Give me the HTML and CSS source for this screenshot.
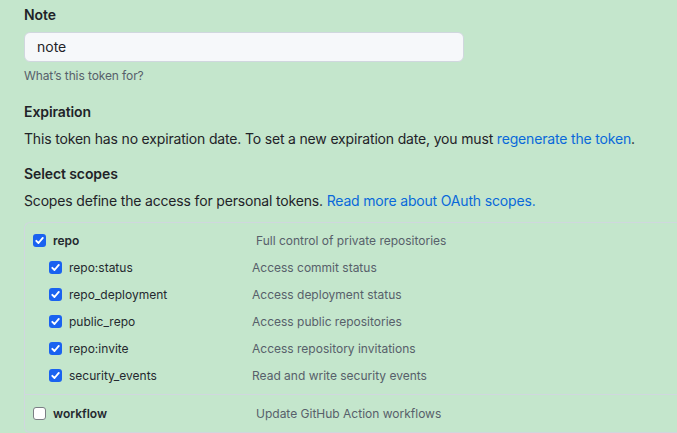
FILE: index.html
```html
<!DOCTYPE html>
<html>
<head>
<meta charset="utf-8">
<link rel="stylesheet" href="styles.css">
</head>
<body>
<div class="page">
  <div class="field">
    <label class="heading">Note</label>
    <div class="input">note</div>
    <p class="hint">What’s this token for?</p>
  </div>
  <div class="section">
    <h3 class="heading">Expiration</h3>
    <p class="text">This token has no expiration date. To set a new expiration date, you must <a class="link">regenerate the token</a>.</p>
  </div>
  <div class="section">
    <h3 class="heading">Select scopes</h3>
    <p class="text">Scopes define the access for personal tokens. <a class="link">Read more about OAuth scopes.</a></p>
  </div>
  <div class="scopes">
    <div class="group">
      <div class="row top">
        <span class="cb on"><svg viewBox="0 0 13 13" width="13" height="13"><path d="M3.3 6.8 L5.5 9 L9.8 3.9" fill="none" stroke="#fff" stroke-width="1.9" stroke-linecap="round" stroke-linejoin="round"/></svg></span>
        <span class="name">repo</span>
        <span class="desc">Full control of private repositories</span>
      </div>
      <div class="row sub">
        <span class="cb on"><svg viewBox="0 0 13 13" width="13" height="13"><path d="M3.3 6.8 L5.5 9 L9.8 3.9" fill="none" stroke="#fff" stroke-width="1.9" stroke-linecap="round" stroke-linejoin="round"/></svg></span>
        <span class="name">repo:status</span>
        <span class="desc">Access commit status</span>
      </div>
      <div class="row sub">
        <span class="cb on"><svg viewBox="0 0 13 13" width="13" height="13"><path d="M3.3 6.8 L5.5 9 L9.8 3.9" fill="none" stroke="#fff" stroke-width="1.9" stroke-linecap="round" stroke-linejoin="round"/></svg></span>
        <span class="name">repo_deployment</span>
        <span class="desc">Access deployment status</span>
      </div>
      <div class="row sub">
        <span class="cb on"><svg viewBox="0 0 13 13" width="13" height="13"><path d="M3.3 6.8 L5.5 9 L9.8 3.9" fill="none" stroke="#fff" stroke-width="1.9" stroke-linecap="round" stroke-linejoin="round"/></svg></span>
        <span class="name">public_repo</span>
        <span class="desc">Access public repositories</span>
      </div>
      <div class="row sub">
        <span class="cb on"><svg viewBox="0 0 13 13" width="13" height="13"><path d="M3.3 6.8 L5.5 9 L9.8 3.9" fill="none" stroke="#fff" stroke-width="1.9" stroke-linecap="round" stroke-linejoin="round"/></svg></span>
        <span class="name">repo:invite</span>
        <span class="desc">Access repository invitations</span>
      </div>
      <div class="row sub">
        <span class="cb on"><svg viewBox="0 0 13 13" width="13" height="13"><path d="M3.3 6.8 L5.5 9 L9.8 3.9" fill="none" stroke="#fff" stroke-width="1.9" stroke-linecap="round" stroke-linejoin="round"/></svg></span>
        <span class="name">security_events</span>
        <span class="desc">Read and write security events</span>
      </div>
    </div>
    <div class="group last">
      <div class="row top">
        <span class="cb off"></span>
        <span class="name">workflow</span>
        <span class="desc">Update GitHub Action workflows</span>
      </div>
    </div>
  </div>
</div>
</body>
</html>
```
FILE: styles.css
```css
html, body {
  margin: 0;
  padding: 0;
  background: #c4e6cc;
}
body {
  font-family: Inter, "Liberation Sans", sans-serif;
  color: #1f2328;
  overflow: hidden;
}
.page {
  padding: 5px 0 0 24px;
}
.heading {
  display: block;
  margin: 0;
  font-size: 14px;
  line-height: 20px;
  font-weight: 600;
  letter-spacing: -0.1px;
}
.input {
  margin-top: 7px;
  box-sizing: border-box;
  width: 440px;
  height: 30px;
  padding: 0 12px;
  line-height: 28px;
  font-size: 14px;
  background: #f6f8fa;
  border: 1px solid #d0d7de;
  border-radius: 6px;
}
.hint {
  margin: 6px 0 0;
  font-size: 12px;
  line-height: 16px;
  letter-spacing: -0.1px;
  color: #57606a;
}
.section {
  margin-top: 18px;
}
.section + .section {
  margin-top: 15px;
}
.text {
  margin: 7px 0 0;
  font-size: 14px;
  line-height: 20px;
  letter-spacing: -0.17px;
}
.link {
  color: #0969da;
  text-decoration: none;
}
.scopes {
  margin-top: 11px;
  border: 1px solid #d0d7de;
  border-right: none;
  border-radius: 6px 0 0 6px;
}
.group {
  padding: 4px 0 5px;
}
.group.last {
  border-top: 1px solid #d0d7de;
  padding: 5px 0 5px;
}
.row {
  display: flex;
  align-items: center;
  height: 27px;
  font-size: 12px;
}
.row.top {
  padding-left: 8px;
}
.row.sub {
  padding-left: 24px;
}
.cb {
  box-sizing: border-box;
  width: 13px;
  height: 13px;
  border-radius: 3px;
  flex: none;
  display: flex;
}
.cb.on {
  background: #1a62f0;
}
.cb.off {
  background: #fff;
  border: 1px solid #7b7f84;
}
.name {
  margin-left: 7px;
  color: #24292f;
}
.row.top .name {
  width: 203px;
  font-weight: 600;
}
.row.sub .name {
  width: 183px;
}
.desc {
  color: #57606a;
}
```
